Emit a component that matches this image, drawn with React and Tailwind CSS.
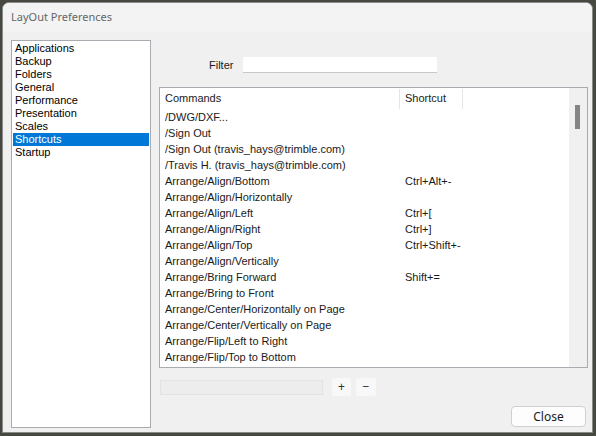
const categories = [
  "Applications",
  "Backup",
  "Folders",
  "General",
  "Performance",
  "Presentation",
  "Scales",
  "Shortcuts",
  "Startup",
]

const commands = [
  ["/DWG/DXF...", ""],
  ["/Sign Out", ""],
  ["/Sign Out (travis_hays@trimble.com)", ""],
  ["/Travis H. (travis_hays@trimble.com)", ""],
  ["Arrange/Align/Bottom", "Ctrl+Alt+-"],
  ["Arrange/Align/Horizontally", ""],
  ["Arrange/Align/Left", "Ctrl+["],
  ["Arrange/Align/Right", "Ctrl+]"],
  ["Arrange/Align/Top", "Ctrl+Shift+-"],
  ["Arrange/Align/Vertically", ""],
  ["Arrange/Bring Forward", "Shift+="],
  ["Arrange/Bring to Front", ""],
  ["Arrange/Center/Horizontally on Page", ""],
  ["Arrange/Center/Vertically on Page", ""],
  ["Arrange/Flip/Left to Right", ""],
  ["Arrange/Flip/Top to Bottom", ""],
]

const uiFont = { fontFamily: '"Noto Sans", "Open Sans", sans-serif' }
const listFont = { fontFamily: '"Liberation Sans", Arial, sans-serif' }

function CategoryList({ selected }) {
  return (
    <div className="w-[140px] shrink-0 border border-[#a8abb0] bg-white pt-[1px] text-[11px] text-black" style={listFont}>
      {categories.map((name) => (
        <div
          key={name}
          className={
            name === selected
              ? "mx-[1px] h-[13px] bg-[#0078d7] pl-[2px] leading-[13px] text-white"
              : "mx-[1px] h-[13px] pl-[2px] leading-[13px]"
          }
        >
          {name}
        </div>
      ))}
    </div>
  )
}

function CommandsTable() {
  return (
    <div className="flex h-[281px] overflow-hidden border border-[#a8abb0] bg-white text-[11px] text-[#1a1a1a]" style={listFont}>
      <div className="flex-1 overflow-hidden">
        <div className="flex h-[21px] items-center">
          <div className="flex h-[20px] w-[240px] items-center border-r border-[#e5e5e5] pl-[5px]">Commands</div>
          <div className="flex h-[20px] w-[63px] items-center border-r border-[#e5e5e5] pl-[5px]">Shortcut</div>
        </div>
        {commands.map(([name, key]) => (
          <div key={name} className="flex h-[16px] items-center">
            <div className="w-[240px] whitespace-nowrap pl-[5px]">{name}</div>
            <div className="w-[63px] whitespace-nowrap pl-[5px]">{key}</div>
          </div>
        ))}
      </div>
      <div className="w-[18px] shrink-0 bg-[#f0f0f0] pl-[6px] pt-[17px]">
        <div className="h-[24px] w-[5px] bg-[#858585]" />
      </div>
    </div>
  )
}

export default function App() {
  return (
    <div className="h-[436px] w-[596px] bg-[#45493f] pb-[3px] pl-[2px] pr-[3px] pt-[2px]" style={uiFont}>
      <div className="flex h-full flex-col overflow-hidden rounded-t-[7px] border border-[#8a8a8a] bg-[#f0f0f0]">
        <div className="flex h-[29px] shrink-0 items-center bg-[#f3f3f3] pl-[8px] text-[11px] text-[#666]">
          LayOut Preferences
        </div>
        <div className="flex flex-1 pb-[4px] pl-[8px] pr-[4px] pt-[8px]">
          <CategoryList selected="Shortcuts" />
          <div className="ml-[8px] flex flex-1 flex-col">
            <div className="mt-[17px] flex h-[16px] items-center">
              <span className="ml-[50px] text-[11px] text-[#1a1a1a]" style={listFont}>Filter</span>
              <div className="ml-[10px] h-[16px] w-[194px] border-b border-[#c8c8c8] bg-white" />
            </div>
            <div className="mt-[14px]">
              <CommandsTable />
            </div>
            <div className="mt-[10px] flex items-center">
              <div className="ml-[1px] h-[15px] w-[163px] border border-[#e3e3e3] bg-[#ededed]" />
              <button className="ml-[9px] flex h-[18px] w-[19px] items-center justify-center rounded-[3px] bg-[#f8f8f8] text-[12px] leading-none text-[#333]">
                +
              </button>
              <button className="ml-[5px] flex h-[18px] w-[20px] items-center justify-center rounded-[3px] bg-[#f8f8f8] text-[12px] leading-none text-[#333]">
                −
              </button>
            </div>
            <div className="mt-[10px] flex justify-end pr-[2px]">
              <button className="h-[21px] w-[75px] rounded-[4px] border border-[#d0d0d0] bg-[#fdfdfd] text-[12px] text-[#1a1a1a]">
                Close
              </button>
            </div>
          </div>
        </div>
      </div>
    </div>
  )
}
